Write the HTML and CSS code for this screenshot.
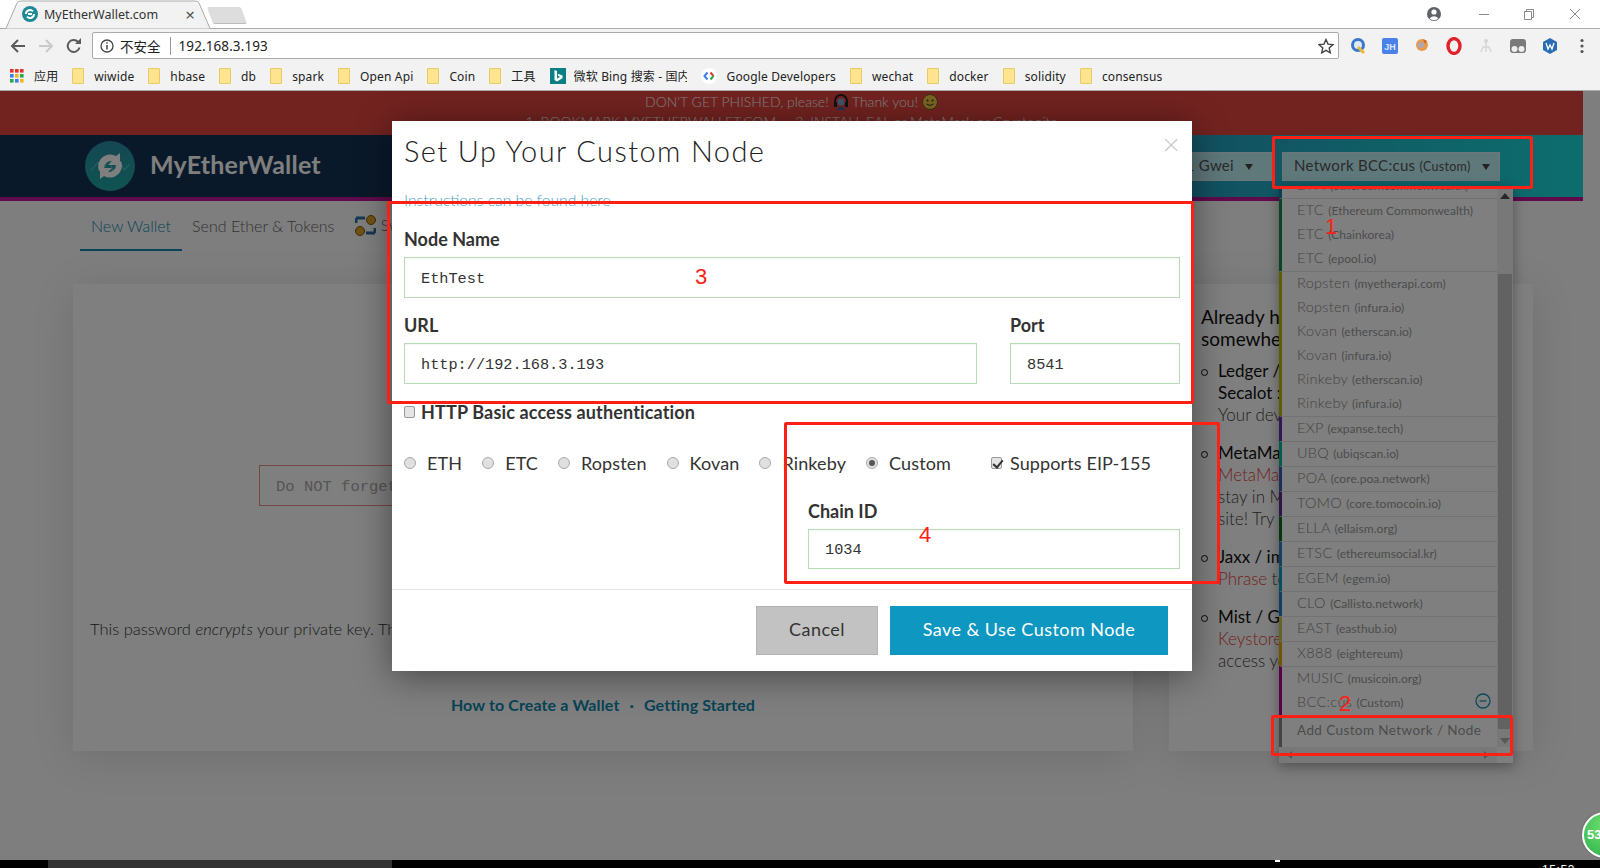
FILE: index.html
```html
<!DOCTYPE html>
<html lang="zh-CN">
<head>
    <meta charset="UTF-8">
    <title>MyEtherWallet.com</title>
    <link rel="stylesheet" href="styles.css">
</head>
<body>
    <div class="tabbar">
        <div class="tab">
            <svg class="tab-shape" width="206" height="29" viewBox="0 0 206 29"><path d="M0 28.5h1L12 3Q13 1 16 1H190Q193 1 194 3L205 28.5h1" fill="#f2f2f2" stroke="#aaa"/></svg>
            <svg class="tab-icon" width="16" height="16" viewBox="0 0 16 16"><circle cx="8" cy="8" r="8" fill="#1d8a94"/><path d="M4 8a4 4 0 0 1 7-2.6M12 8a4 4 0 0 1-7 2.6M6 8h4" fill="none" stroke="#fff" stroke-width="2"/></svg>
            <span class="tab-title">MyEtherWallet.com</span>
            <span class="tab-close">×</span>
        </div>
        <div class="newtab"></div>
        <div class="winbtns">
            <svg width="16" height="16" viewBox="0 0 16 16"><circle cx="8" cy="8" r="7" fill="#5f6368"/><circle cx="8" cy="6" r="2.6" fill="#fff"/><path d="M3.5 12.5Q8 8 12.5 12.5Q8 16 3.5 12.5" fill="#fff"/></svg>
            <svg class="win-min" width="12" height="12" viewBox="0 0 12 12"><path d="M1 6.5h10" stroke="#888"/></svg>
            <svg class="win-max" width="12" height="12" viewBox="0 0 12 12"><path d="M1.5 3.5h7v8h-7zM3.5 3.5v-2h7v8h-2" fill="none" stroke="#888"/></svg>
            <svg class="win-close" width="12" height="12" viewBox="0 0 12 12"><path d="M1 1l10 10M11 1L1 11" stroke="#888"/></svg>
        </div>
    </div>

    <div class="toolbar">
        <svg class="nav-back" width="16" height="16" viewBox="0 0 16 16"><path d="M15 8H2M8 2L2 8l6 6" fill="none" stroke="#5a5a5a" stroke-width="2"/></svg>
        <svg class="nav-fwd" width="16" height="16" viewBox="0 0 16 16"><path d="M1 8h13M8 2l6 6-6 6" fill="none" stroke="#c9c9c9" stroke-width="2"/></svg>
        <svg class="nav-reload" width="16" height="16" viewBox="0 0 16 16"><path d="M13.5 9.5A6 6 0 1 1 12 3.8" fill="none" stroke="#5a5a5a" stroke-width="2"/><path d="M9 6h6V0z" fill="#5a5a5a"/></svg>
        <div class="omnibox">
            <svg width="14" height="14" viewBox="0 0 14 14"><circle cx="7" cy="7" r="6" fill="none" stroke="#444" stroke-width="1.3"/><path d="M7 6v4.5M7 3.2v1.6" stroke="#444" stroke-width="1.5"/></svg>
            <span class="omni-warn">不安全</span>
            <span class="omni-url">192.168.3.193</span>
            <svg class="omni-star" width="16" height="16" viewBox="0 0 16 16"><path d="M8 1.5l2 4.6 5 .5-3.8 3.3 1.1 4.9L8 12.3l-4.3 2.5 1.1-4.9L1 6.6l5-.5z" fill="none" stroke="#444" stroke-width="1.4"/></svg>
        </div>
        <div class="exts">
            <svg width="16" height="18" viewBox="0 0 16 18"><circle cx="8" cy="8" r="7" fill="#3b78c9"/><circle cx="8" cy="8" r="4" fill="#dbe9fa"/><path d="M8 10l6 6" stroke="#e8b93a" stroke-width="3"/></svg>
            <svg width="16" height="18" viewBox="0 0 16 18"><rect y="1" width="16" height="16" rx="2" fill="#4a80e8"/><text x="8" y="13" font-size="9" font-weight="700" font-family="Liberation Sans" text-anchor="middle" fill="#dbe7ff">JH</text></svg>
            <svg width="16" height="18" viewBox="0 0 16 18"><circle cx="8" cy="8" r="6" fill="#e89a4c"/><circle cx="7" cy="8" r="3" fill="#a9a9b8"/><path d="M9 2l4 2-2 3z" fill="#d8631e"/></svg>
            <svg width="16" height="18" viewBox="0 0 16 18"><ellipse cx="8" cy="9" rx="6" ry="7.4" fill="none" stroke="#e0232b" stroke-width="3.4"/></svg>
            <svg width="16" height="18" viewBox="0 0 16 18"><circle cx="8" cy="4" r="2" fill="#d5d5d5"/><path d="M8 6v5M3 15l2-5h6l2 5M8 11v4" fill="none" stroke="#d5d5d5" stroke-width="1.4"/></svg>
            <svg width="16" height="18" viewBox="0 0 16 18"><rect y="2" width="16" height="14" rx="3" fill="#7a7a7a"/><circle cx="4.5" cy="12" r="3" fill="#eee"/><circle cx="11.5" cy="12" r="3" fill="#eee"/></svg>
            <svg width="16" height="18" viewBox="0 0 16 18"><path d="M8 1l7 4v8l-7 4-7-4V5z" fill="#2a6db5"/><path d="M4 6l2 6 2-4 2 4 2-6" fill="none" stroke="#fff" stroke-width="1.3"/></svg>
            <svg width="16" height="18" viewBox="0 0 16 18"><circle cx="8" cy="3.5" r="1.6" fill="#555"/><circle cx="8" cy="9" r="1.6" fill="#555"/><circle cx="8" cy="14.5" r="1.6" fill="#555"/></svg>
        </div>
    </div>

    <div class="bookmarks">
        <div class="bm">
            <svg width="14" height="14" viewBox="0 0 14 14"><rect width="3.6" height="3.6" fill="#e5352b"/><rect x="5" width="3.6" height="3.6" fill="#e5352b"/><rect x="10" width="3.6" height="3.6" fill="#e5352b"/><rect y="5" width="3.6" height="3.6" fill="#3d7fe8"/><rect x="5" y="5" width="3.6" height="3.6" fill="#f3b81f"/><rect x="10" y="5" width="3.6" height="3.6" fill="#2ea44f"/><rect y="10" width="3.6" height="3.6" fill="#2ea44f"/><rect x="5" y="10" width="3.6" height="3.6" fill="#3d7fe8"/><rect x="10" y="10" width="3.6" height="3.6" fill="#f3b81f"/></svg>
            <span>应用</span>
        </div>
        <div class="bm"><i class="folder"></i><span>wiwide</span></div>
        <div class="bm"><i class="folder"></i><span>hbase</span></div>
        <div class="bm"><i class="folder"></i><span>db</span></div>
        <div class="bm"><i class="folder"></i><span>spark</span></div>
        <div class="bm"><i class="folder"></i><span>Open Api</span></div>
        <div class="bm"><i class="folder"></i><span>Coin</span></div>
        <div class="bm"><i class="folder"></i><span>工具</span></div>
        <div class="bm">
            <svg width="16" height="16" viewBox="0 0 16 16"><rect width="16" height="16" fill="#0b7f83"/><path d="M4.5 2l2.5 1v7.5l3-1.6-1.6-.8-.9-2.3 5 1.8v2.7L7 13.5l-2.5-1.4z" fill="#fff"/></svg>
            <span class="bm-fade">微软 Bing 搜索 - 国内</span>
        </div>
        <div class="bm">
            <svg width="16" height="16" viewBox="0 0 16 16"><circle cx="8" cy="8" r="8" fill="#fff"/><path d="M6.5 4.5L3.5 8l3 3.5" fill="none" stroke="#3d7fe8" stroke-width="2"/><path d="M9.5 4.5l3 3.5" fill="none" stroke="#e5352b" stroke-width="2"/><path d="M12.5 8l-3 3.5" fill="none" stroke="#2ea44f" stroke-width="2"/></svg>
            <span>Google Developers</span>
        </div>
        <div class="bm"><i class="folder"></i><span>wechat</span></div>
        <div class="bm"><i class="folder"></i><span>docker</span></div>
        <div class="bm"><i class="folder"></i><span>solidity</span></div>
        <div class="bm"><i class="folder"></i><span>consensus</span></div>
    </div>

    <div class="page">
        <div class="site">
            <div class="banner">
                <p class="banner-top">DON'T GET PHISHED, please!
                    <svg width="16" height="16" viewBox="0 0 16 16"><path d="M2 10V7a6 6 0 0 1 12 0v3" fill="none" stroke="#222" stroke-width="2"/><circle cx="8" cy="8" r="3.4" fill="#7aa9d8"/><path d="M4 16q4-7 8 0z" fill="#2d6fb0"/><rect x="1" y="8" width="3" height="5" fill="#222"/><rect x="12" y="8" width="3" height="5" fill="#222"/></svg>
                    Thank you!
                    <svg width="16" height="16" viewBox="0 0 16 16"><circle cx="8" cy="8" r="7.5" fill="#f6c945" stroke="#7a5a10"/><circle cx="5.5" cy="6.5" r="1" fill="#333"/><circle cx="10.5" cy="6.5" r="1" fill="#333"/><path d="M4.5 10q3.5 3 7 0" fill="none" stroke="#333"/></svg>
                </p>
                <p class="banner-sub">1. BOOKMARK MYETHERWALLET.COM &nbsp;&nbsp;&nbsp; 2. INSTALL EAL or MetaMask or Cryptonite</p>
            </div>
            <div class="header">
                <svg class="logo" width="50" height="50" viewBox="0 0 50 50"><defs><linearGradient id="lg" x1="0" y1="0" x2="0" y2="1"><stop offset="0" stop-color="#2a8fa6"/><stop offset="1" stop-color="#1fa8a4"/></linearGradient></defs><circle cx="25" cy="25" r="25" fill="url(#lg)"/><path d="M6 30l7-9 5 10 6-16 5 20 6-14 4 8 6-6" fill="none" stroke="#4fd0c8" stroke-width="1"/><path d="M14 30a12 12 0 0 1 17-15l4-3v12H23l4-4a7 7 0 0 0-8 7z" fill="#fff"/><path d="M36 20a12 12 0 0 1-17 15l-4 3V27h12l-4 4a7 7 0 0 0 8-7z" fill="#fff"/></svg>
                <span class="brand">MyEtherWallet</span>
                <div class="hdr-btns">
                    <div class="hdr-btn hdr-gas">Gas Price: 21 Gwei<i class="caret"></i></div>
                    <div class="hdr-btn hdr-net">Network BCC:cus <small>(Custom)</small><i class="caret"></i></div>
                </div>
            </div>
            <div class="navtabs">
                <a class="navtab active">New Wallet</a>
                <a class="navtab">Send Ether &amp; Tokens</a>
                <a class="navtab navtab-swap">
                    <svg width="21" height="21" viewBox="0 0 21 21"><circle cx="16" cy="5" r="4.5" fill="#e0a526" stroke="#7a5a10"/><circle cx="5" cy="16" r="4.5" fill="#e0a526" stroke="#7a5a10"/><path d="M1 3h9M1 3v5M20 18h-9M20 18v-5" fill="none" stroke="#2d6fa0" stroke-width="3"/></svg>
                    Swap
                </a>
            </div>
            <div class="cols">
                <div class="card card-main">
                    <input class="pw-input" type="text" placeholder="Do NOT forget to save this!">
                    <p class="pw-note">This password <em>encrypts</em> your private key. This does not act as a seed to generate your keys.</p>
                    <p class="guides"><a>How to Create a Wallet</a><span>·</span><a>Getting Started</a></p>
                </div>
                <div class="card card-side">
                    <h4>Already have a wallet<br>somewhere?</h4>
                    <ul>
                        <li><b>Ledger / TREZOR /<br>Secalot :</b> Use your<br><span>Your device is your wallet.</span></li>
                        <li><b>MetaMask</b> Connect via<br><u>MetaMask</u> Extension<br><span>stay in MetaMask and</span><br><span>site! Try it today.</span></li>
                        <li><b>Jaxx / imToken</b><br><u>Phrase</u> <span>to access</span></li>
                        <li><b>Mist / Geth / Parity:</b><br><u>Keystore</u> <span>file to</span><br><span>access your wallet</span></li>
                    </ul>
                </div>
            </div>
        </div>

        <div class="netmenu">
            <div class="netmenu-body">
                <div class="netlist">
                    <div class="netgroup g-eth"><div class="netitem">ETH <small>(ethereumcommonwealth)</small></div></div>
                    <div class="netgroup g-etc">
                        <div class="netitem">ETC <small>(Ethereum Commonwealth)</small></div>
                        <div class="netitem">ETC <small>(Chainkorea)</small></div>
                        <div class="netitem">ETC <small>(epool.io)</small></div>
                    </div>
                    <div class="netgroup g-test">
                        <div class="netitem">Ropsten <small>(myetherapi.com)</small></div>
                        <div class="netitem">Ropsten <small>(infura.io)</small></div>
                        <div class="netitem">Kovan <small>(etherscan.io)</small></div>
                        <div class="netitem">Kovan <small>(infura.io)</small></div>
                        <div class="netitem">Rinkeby <small>(etherscan.io)</small></div>
                        <div class="netitem">Rinkeby <small>(infura.io)</small></div>
                    </div>
                    <div class="netgroup g-exp"><div class="netitem">EXP <small>(expanse.tech)</small></div></div>
                    <div class="netgroup g-ubq"><div class="netitem">UBQ <small>(ubiqscan.io)</small></div></div>
                    <div class="netgroup g-poa"><div class="netitem">POA <small>(core.poa.network)</small></div></div>
                    <div class="netgroup g-tomo"><div class="netitem">TOMO <small>(core.tomocoin.io)</small></div></div>
                    <div class="netgroup g-ella"><div class="netitem">ELLA <small>(ellaism.org)</small></div></div>
                    <div class="netgroup g-etsc"><div class="netitem">ETSC <small>(ethereumsocial.kr)</small></div></div>
                    <div class="netgroup g-egem"><div class="netitem">EGEM <small>(egem.io)</small></div></div>
                    <div class="netgroup g-clo"><div class="netitem">CLO <small>(Callisto.network)</small></div></div>
                    <div class="netgroup g-east"><div class="netitem">EAST <small>(easthub.io)</small></div></div>
                    <div class="netgroup g-x888"><div class="netitem">X888 <small>(eightereum)</small></div></div>
                    <div class="netgroup g-music">
                        <div class="netitem">MUSIC <small>(musicoin.org)</small></div>
                        <div class="netitem netitem-custom">BCC:cus <small>(Custom)</small>
                            <svg width="16" height="16" viewBox="0 0 16 16"><circle cx="8" cy="8" r="7" fill="none" stroke="#1f8fb5" stroke-width="1.3"/><path d="M4.5 8h7" stroke="#1f8fb5" stroke-width="1.3"/></svg>
                        </div>
                    </div>
                    <div class="netgroup g-add"><div class="netitem netitem-add">Add Custom Network / Node</div></div>
                </div>
                <div class="vscroll">
                    <i class="arrow-up"></i>
                    <div class="vthumb"></div>
                    <i class="arrow-down"></i>
                </div>
            </div>
            <div class="hscroll"><i class="arrow-left"></i><i class="arrow-right"></i></div>
        </div>

        <div class="backdrop"></div>

        <div class="modal">
            <span class="modal-close">×</span>
            <h3 class="modal-title">Set Up Your Custom Node</h3>
            <a class="modal-link">Instructions can be found here</a>
            <label class="field-label field-name">Node Name</label>
            <input class="field field-wide" type="text" value="EthTest">
            <div class="field-row">
                <div>
                    <label class="field-label">URL</label>
                    <input class="field" type="text" value="http://192.168.3.193">
                </div>
                <div>
                    <label class="field-label">Port</label>
                    <input class="field" type="text" value="8541">
                </div>
            </div>
            <label class="auth"><input class="check" type="checkbox">HTTP Basic access authentication</label>
            <div class="radios">
                <label><input class="radio" type="radio" name="net">ETH</label>
                <label><input class="radio" type="radio" name="net">ETC</label>
                <label><input class="radio" type="radio" name="net">Ropsten</label>
                <label><input class="radio" type="radio" name="net">Kovan</label>
                <label><input class="radio" type="radio" name="net">Rinkeby</label>
                <label><input class="radio" type="radio" name="net" checked>Custom</label>
                <label class="eip"><input class="check" type="checkbox" checked>Supports EIP-155</label>
            </div>
            <div class="chain">
                <label class="field-label">Chain ID</label>
                <input class="field field-chain" type="text" value="1034">
            </div>
            <div class="modal-foot">
                <button class="btn-cancel">Cancel</button>
                <button class="btn-save">Save &amp; Use Custom Node</button>
            </div>
        </div>

        <div class="badge">53</div>
    </div>

    <div class="taskbar">
        <span class="task-active"></span>
        <span class="task-tray"></span>
        <span class="task-clock">15:53</span>
    </div>

    <!-- red marks somebody drew on the screenshot -->
    <div class="mark mark-1"></div>
    <div class="mark mark-2"></div>
    <div class="mark mark-3"></div>
    <div class="mark mark-4"></div>
    <span class="num num-1">1</span>
    <span class="num num-2">2</span>
    <span class="num num-3">3</span>
    <span class="num num-4">4</span>
</body>
</html>
```

FILE: styles.css
```css
* {
    box-sizing: border-box;
}
body {
    margin: 0;
    width: 1600px;
    height: 868px;
    overflow: hidden;
    position: relative;
    font-family: Lato, "Open Sans", sans-serif;
    background: #000;
}
p, h3, h4, ul {
    margin: 0;
    padding: 0;
}

/* browser chrome */
.tabbar {
    height: 29px;
    background: #fff;
    border-bottom: 1px solid #aaa;
    display: flex;
    align-items: flex-start;
    padding-left: 5px;
}
.tab {
    position: relative;
    width: 206px;
    height: 29px;
    display: flex;
    align-items: center;
    padding: 0 0 1px 17px;
    font-family: "Noto Sans", "Noto Sans CJK SC", sans-serif;
}
.tab-shape {
    position: absolute;
    left: 0;
    top: 0;
}
.tab-icon {
    position: relative;
}
.tab-title {
    position: relative;
    margin-left: 6px;
    font-size: 12.5px;
    color: #333;
}
.tab-close {
    position: relative;
    margin-left: 27px;
    font-size: 17px;
    color: #555;
}
.newtab {
    width: 34px;
    height: 17px;
    margin: 7px 0 0 -1px;
    background: #ddd;
    border-bottom: 1px solid #bbb;
    transform: skewX(20deg);
    border-radius: 2px;
}
.winbtns {
    margin-left: auto;
    display: flex;
    align-items: center;
    height: 27px;
    padding-right: 19px;
}
.win-min {
    margin-left: 36px;
}
.win-max {
    margin-left: 33px;
}
.win-close {
    margin-left: 34px;
}

.toolbar {
    height: 33px;
    background: #f2f2f2;
    display: flex;
    align-items: center;
    padding-left: 10px;
}
.nav-fwd {
    margin-left: 12px;
}
.nav-reload {
    margin-left: 12px;
}
.omnibox {
    margin-left: 10px;
    width: 1247px;
    height: 27px;
    background: #fff;
    border: 1px solid #aaa;
    border-radius: 2px;
    display: flex;
    align-items: center;
    padding-left: 7px;
    font-family: "Noto Sans", "Noto Sans CJK SC", sans-serif;
    font-size: 14px;
    color: #222;
}
.omni-warn {
    margin-left: 6px;
    padding: 1px 9px 0 0;
    font-family: "Noto Sans CJK SC", sans-serif;
    font-size: 13.5px;
    border-right: 1px solid #999;
    line-height: 17px;
}
.omni-url {
    margin-left: 8px;
    padding-top: 1px;
    font-size: 13.5px;
    letter-spacing: .1px;
}
.omni-star {
    margin-left: auto;
    margin-right: 4px;
}
.exts {
    display: flex;
    gap: 16px;
    margin-left: 11px;
}

.bookmarks {
    height: 29px;
    background: #f2f2f2;
    border-bottom: 1px solid #aaa;
    display: flex;
    align-items: center;
    gap: 14px;
    padding-left: 10px;
    font-family: "Noto Sans", "Noto Sans CJK SC", sans-serif;
    font-size: 12px;
    letter-spacing: .14px;
    color: #222;
}
.bm {
    display: flex;
    align-items: center;
    gap: 10px;
}
.bm-fade {
    width: 113px;
    overflow: hidden;
    white-space: nowrap;
    margin-left: -2px;
}
.folder {
    width: 12px;
    height: 16px;
    background: #ffe48f;
    border: 1px solid #e8c964;
    border-radius: 1px;
}

/* the wallet page, dimmed by the backdrop */
.page {
    position: relative;
    height: 769px;
    overflow: hidden;
    background: #fcfcfc;
}
.site {
    width: 1583px;
}
.banner {
    height: 44px;
    background: #e44640;
    color: #fff;
    text-align: center;
    font-weight: 300;
    font-size: 14px;
    padding-top: 1px;
}
.banner-top {
    height: 20px;
    line-height: 20px;
}
.banner-top svg {
    vertical-align: -3px;
}
.banner-sub {
    line-height: 20px;
    font-size: 14px;
}
.header {
    height: 66px;
    border-bottom: 4px solid #be1494;
    background: linear-gradient(to right, #143252 0%, #143252 30%, #26a0c0 75%, #1adcdc 100%);
    display: flex;
    align-items: center;
    padding-left: 85px;
    color: #fff;
}
.brand {
    margin: -4px 0 0 15px;
    font-size: 25px;
    font-weight: 700;
    letter-spacing: .2px;
}
.hdr-btns {
    margin-left: auto;
    display: flex;
    gap: 7px;
    padding-right: 83px;
}
.hdr-btn {
    height: 29px;
    line-height: 25px;
    background: rgb(190, 240, 245);
    border: 1px solid #d6eef0;
    color: #555;
    font-size: 15px;
    padding: 0 11px;
    letter-spacing: .3px;
    white-space: nowrap;
}
.hdr-btn small {
    font-size: 12.5px;
}
.hdr-gas {
    width: 200px;
    text-align: right;
    padding-right: 21px;
}
.hdr-net {
    width: 218px;
    padding-right: 0;
}
.caret {
    display: inline-block;
    margin-left: 11px;
    border-top: 6px solid #444;
    border-left: 4px solid transparent;
    border-right: 4px solid transparent;
    vertical-align: 1px;
}
.navtabs {
    height: 50px;
    padding-left: 80px;
    display: flex;
    font-size: 16px;
    font-weight: 300;
    color: #666;
}
.navtab {
    padding: 15px 11px 0;
    margin-right: -1px;
    white-space: nowrap;
}
.navtab.active {
    color: #0e88ad;
    border-bottom: 2px solid #0e88ad;
}
.navtab-swap {
    margin-left: 0;
    padding-top: 14px;
}
.navtab-swap svg {
    vertical-align: -5px;
}
.cols {
    display: flex;
    gap: 36px;
    padding: 33px 0 0 73px;
}
.card {
    height: 467px;
    background: #fff;
    box-shadow: 0 6px 40px rgba(0, 0, 0, .12);
}
.card-main {
    width: 1060px;
    padding: 181px 17px 0;
}
.pw-input {
    display: block;
    width: 688px;
    height: 41px;
    margin-left: 169px;
    border: 1px solid #ee8a86;
    padding: 2px 16px 0;
    font-family: "Liberation Mono", monospace;
    font-size: 15.5px;
    background: #fff;
}
.pw-input::placeholder {
    color: #aaa;
}
.pw-note {
    margin-top: 113px;
    font-size: 16.5px;
    font-weight: 300;
    color: #333;
}
.guides {
    margin-top: 56px;
    text-align: center;
    font-size: 16px;
    font-weight: 700;
    letter-spacing: .12px;
    color: #0e88ad;
}
.guides span {
    margin: 0 10px;
}
.card-side {
    width: 364px;
    padding: 22px 0 0 32px;
    font-size: 17px;
    line-height: 22px;
    color: #111;
    white-space: nowrap;
}
.card-side h4 {
    font-size: 19px;
    font-weight: 400;
}
.card-side ul {
    margin-top: 10px;
    list-style: none;
}
.card-side li {
    position: relative;
    padding-left: 17px;
    margin-bottom: 16px;
    font-weight: 400;
}
.card-side li::before {
    content: "";
    position: absolute;
    left: 0;
    top: 9px;
    width: 5px;
    height: 5px;
    border: 1px solid #111;
    border-radius: 50%;
}
.card-side b {
    font-weight: 400;
}
.card-side span {
    font-weight: 300;
    color: #444;
}
.card-side u {
    text-decoration: none;
    font-weight: 300;
    color: #e44640;
}

/* network dropdown */
.netmenu {
    position: absolute;
    left: 1279px;
    top: 95px;
    width: 234px;
    height: 577px;
    background: #fff;
    box-shadow: 0 3px 12px rgba(0, 0, 0, .35);
    overflow: hidden;
    z-index: 1;
}
.netmenu-body {
    display: flex;
    height: 561px;
}
.netlist {
    width: 218px;
    margin-top: -13px;
    font-size: 14.5px;
    font-weight: 300;
    color: #888;
    letter-spacing: .3px;
}
.netgroup {
    border-top: 1px solid #e4e4e4;
    border-left: 3px solid #aaa;
}
.netitem {
    height: 24px;
    line-height: 21px;
    padding-left: 15px;
    white-space: nowrap;
    position: relative;
}
.netitem small {
    font-size: 12px;
    font-weight: 400;
    letter-spacing: .05px;
    color: #999;
}
.netitem-custom svg {
    position: absolute;
    left: 193px;
    top: 2px;
}
.netitem-add {
    height: 32px;
    line-height: 31px;
    letter-spacing: .4px;
    font-size: 13.5px;
    font-weight: 400;
    color: #999;
}
.g-eth { border-left-color: #1a7a9c; }
.g-etc { border-left-color: #0e8a4c; }
.g-test { border-left-color: #b8b800; }
.g-exp { border-left-color: #5e30b0; }
.g-ubq { border-left-color: #00b898; }
.g-poa { border-left-color: #3a5bb0; }
.g-tomo { border-left-color: #5a2a90; }
.g-ella { border-left-color: #0a6a20; }
.g-etsc { border-left-color: #2f7ac0; }
.g-egem { border-left-color: #0a9ac0; }
.g-clo { border-left-color: #1a80c0; }
.g-east { border-left-color: #c8c848; }
.g-x888 { border-left-color: #e0a800; }
.g-music { border-left-color: #b00090; }
.g-add { border-left-color: #888; border-top: 0; }
.vscroll {
    width: 16px;
    background: #f1f1f1;
    margin-left: 0;
    display: flex;
    flex-direction: column;
    align-items: center;
    position: relative;
}
.arrow-up {
    margin-top: 7px;
    border-bottom: 6px solid #505050;
    border-left: 5px solid transparent;
    border-right: 5px solid transparent;
}
.vthumb {
    margin-top: 75px;
    width: 14px;
    height: 455px;
    background: #c4c4c4;
}
.arrow-down {
    margin-top: 9px;
    border-top: 6px solid #b0b0b0;
    border-left: 5px solid transparent;
    border-right: 5px solid transparent;
}
.hscroll {
    height: 16px;
    width: 218px;
    background: #f1f1f1;
    display: flex;
    justify-content: space-between;
    align-items: center;
    padding: 0 8px;
}
.arrow-left {
    border-right: 5px solid #aaa;
    border-top: 4px solid transparent;
    border-bottom: 4px solid transparent;
}
.arrow-right {
    border-left: 5px solid #aaa;
    border-top: 4px solid transparent;
    border-bottom: 4px solid transparent;
}

.backdrop {
    position: absolute;
    inset: 0;
    background: rgba(0, 0, 0, .5);
    z-index: 2;
}

/* modal */
.modal {
    position: absolute;
    left: 392px;
    top: 30px;
    width: 800px;
    height: 550px;
    background: #fff;
    box-shadow: 0 5px 34px rgba(0, 0, 0, .45);
    padding-top: 12px;
    z-index: 3;
    color: #333;
}
.modal > * {
    margin-left: 12px;
    margin-right: 12px;
}
.modal-close {
    position: absolute;
    right: 0;
    top: 4px;
    font-size: 30px;
    font-weight: 300;
    color: #c8c8c8;
}
.modal-title {
    height: 40px;
    line-height: 36px;
    font-size: 29px;
    font-weight: 300;
    letter-spacing: 1.4px;
    color: #222;
}
.modal-link {
    display: block;
    margin-top: 17px;
    height: 20px;
    line-height: 20px;
    font-size: 15.7px;
    font-weight: 300;
    color: #4a9fc8;
}
.field-label {
    display: block;
    height: 22px;
    line-height: 20px;
    font-size: 18px;
    font-weight: 700;
    color: #333;
}
.modal > .field-name {
    margin-top: 19px;
}
.field {
    display: block;
    width: 100%;
    height: 41px;
    margin-top: 6px;
    border: 1px solid #b5dfb3;
    box-shadow: inset 0 1px 1px rgba(0, 0, 0, .04);
    padding: 2px 16px 0;
    font-family: "Liberation Mono", monospace;
    font-size: 15.25px;
    color: #333;
    outline: none;
}
.modal > .field-wide {
    width: 776px;
}
.field-row {
    display: grid;
    grid-template-columns: 573px 170px;
    gap: 33px;
    margin-top: 17px;
}
.auth {
    display: flex;
    align-items: center;
    gap: 6px;
    margin-top: 17px;
    height: 22px;
    line-height: 20px;
    font-size: 18px;
    font-weight: 700;
    letter-spacing: .15px;
    color: #333;
}
.check {
    appearance: none;
    margin: 0;
    width: 11px;
    height: 12px;
    border: 1px solid #999;
    border-radius: 2px;
    background: #e4e4e4;
    position: relative;
    flex: none;
}
.check:checked::after {
    content: "";
    position: absolute;
    left: 3px;
    top: 0;
    width: 4px;
    height: 8px;
    border: solid #333;
    border-width: 0 2px 2px 0;
    transform: rotate(40deg);
}
.radios {
    display: flex;
    align-items: center;
    gap: 20px;
    height: 24px;
    margin-top: 28px;
    font-size: 18px;
    letter-spacing: .12px;
    color: #333;
}
.radios label {
    display: flex;
    align-items: center;
    gap: 11px;
}
.radio {
    appearance: none;
    margin: 0;
    width: 12px;
    height: 12px;
    border: 1px solid #aaa;
    border-radius: 50%;
    background: #e0e0e0;
    position: relative;
    flex: none;
}
.radio:checked::after {
    content: "";
    position: absolute;
    left: 2px;
    top: 2px;
    width: 6px;
    height: 6px;
    border-radius: 50%;
    background: #555;
}
.radios .eip {
    margin-left: 20px;
    gap: 8px;
}
.chain {
    margin-top: 26px;
    padding-left: 404px;
}
.field-chain {
    height: 40px;
}
.modal-foot {
    margin: 20px 0 0 !important;
    border-top: 1px solid #e5e5e5;
    padding: 16px 24px 16px 0;
    display: flex;
    justify-content: flex-end;
    gap: 12px;
}
.modal-foot button {
    height: 49px;
    padding: 0 0 3px;
    border: 0;
    font-family: Lato, sans-serif;
    font-size: 18px;
    letter-spacing: .45px;
}
.btn-cancel {
    width: 122px;
    background: #c2c2c2;
    border: 1px solid #b4b4b4 !important;
    color: #333;
}
.btn-save {
    width: 278px;
    background: #0e97c0;
    color: #fff;
}

.badge {
    position: absolute;
    left: 1582px;
    top: 721px;
    width: 46px;
    height: 46px;
    border-radius: 50%;
    background: radial-gradient(circle at 50% 30%, #6ee06e, #2cb04a);
    border: 2px solid #fff;
    box-shadow: 0 0 2px #555;
    color: #fff;
    font: 700 13px "Liberation Sans", sans-serif;
    line-height: 42px;
    padding-left: 3px;
    z-index: 4;
}

/* windows taskbar, mostly cut off */
.taskbar {
    height: 8px;
    background: #000;
    position: relative;
    overflow: hidden;
    display: flex;
}
.task-active {
    margin-left: 48px;
    width: 344px;
    background: #333;
}
.task-tray {
    margin-left: 883px;
    width: 5px;
    height: 2px;
    background: #fff;
}
.task-clock {
    margin-left: auto;
    margin-right: 25px;
    margin-top: 3px;
    color: #fff;
    font: 12px "Liberation Sans", sans-serif;
    letter-spacing: .6px;
}

/* hand drawn marks */
.mark {
    position: absolute;
    border: 3px solid #ff2015;
    border-radius: 2px;
    z-index: 5;
}
.mark-1 { left: 1272px; top: 136px; width: 261px; height: 53px; }
.mark-2 { left: 1271px; top: 715px; width: 242px; height: 41px; }
.mark-3 { left: 387px; top: 201px; width: 807px; height: 203px; }
.mark-4 { left: 784px; top: 422px; width: 436px; height: 162px; }
.num {
    position: absolute;
    font: 22px "Liberation Sans", sans-serif;
    color: #ff2015;
    z-index: 5;
    line-height: 24px;
}
.num-1 { left: 1325px; top: 215px; }
.num-2 { left: 1339px; top: 692px; }
.num-3 { left: 695px; top: 265px; }
.num-4 { left: 919px; top: 523px; }
```
